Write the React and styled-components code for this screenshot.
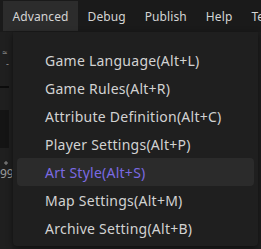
import React from "react";
import styled, { createGlobalStyle } from "styled-components";

const Global = createGlobalStyle`
  html, body { margin: 0; padding: 0; background: #1e1e1e; }
  body { font-family: "Noto Sans", "Open Sans", sans-serif; overflow: hidden; }
  #root { width: 261px; height: 249px; }
`;

const Screen = styled.div`
  position: relative;
  width: 261px;
  height: 249px;
  overflow: hidden;
  background: #1e1e1e;
`;

const MenuBar = styled.div`
  display: flex;
  align-items: center;
  height: 32px;
  padding-left: 3px;
  background: #1a1a1a;
  white-space: nowrap;
`;

const BarItem = styled.div`
  display: flex;
  align-items: center;
  height: 30px;
  padding: 0 9.5px;
  font-size: 12px;
  letter-spacing: 0.1px;
  color: #d4d4d4;
  background: ${(p) => (p.$active ? "#2c2c2c" : "transparent")};
`;

const Side = styled.div`
  width: 12px;
  height: 217px;
  display: flex;
  flex-direction: column;
  background: #1f1f1f;
  overflow: hidden;
`;

const Glyph = styled.div`
  height: ${(p) => p.$h}px;
  line-height: ${(p) => p.$h}px;
  padding-left: ${(p) => p.$pl || 0}px;
  font-size: ${(p) => p.$fs || 9}px;
  color: #9c9c9c;
  white-space: nowrap;
  overflow: hidden;
`;

const Rule = styled.div`
  width: 9px;
  height: 2px;
  background: #0c0c0c;
`;

const DarkBlock = styled.div`
  width: 9px;
  height: 38px;
  background: #141414;
`;

const Dropdown = styled.div`
  position: absolute;
  top: 32px;
  left: 13px;
  width: 245px;
  height: 214px;
  box-sizing: border-box;
  padding: 14px 4px 4px;
  background: #1f1f1f;
  border-radius: 0 0 4px 4px;
  box-shadow: 0 2px 6px rgba(0, 0, 0, 0.5);
  display: flex;
  flex-direction: column;
`;

const Item = styled.div`
  height: 28px;
  display: flex;
  align-items: center;
  padding-left: 28px;
  border-radius: 4px;
  font-size: 14px;
  letter-spacing: 0.25px;
  white-space: nowrap;
  color: ${(p) => (p.$active ? "#7b6ae2" : "#d2d2d2")};
  background: ${(p) => (p.$active ? "#2b2b2b" : "transparent")};
`;

const items = [
  "Game Language(Alt+L)",
  "Game Rules(Alt+R)",
  "Attribute Definition(Alt+C)",
  "Player Settings(Alt+P)",
  "Art Style(Alt+S)",
  "Map Settings(Alt+M)",
  "Archive Setting(Alt+B)",
];

export default function App() {
  return (
    <Screen>
      <Global />
      <MenuBar>
        <BarItem $active>Advanced</BarItem>
        <BarItem>Debug</BarItem>
        <BarItem>Publish</BarItem>
        <BarItem>Help</BarItem>
        <BarItem>Te</BarItem>
      </MenuBar>
      <Side>
        <Glyph $h={16} />
        <Glyph $h={10} $pl={2}>≈</Glyph>
        <Glyph $h={12} $pl={6}>-</Glyph>
        <Glyph $h={16} />
        <Rule />
        <Glyph $h={22} />
        <DarkBlock />
        <Glyph $h={12} />
        <svg width="12" height="6" viewBox="0 0 12 6">
          <path d="M6 1v4M4 3h4" stroke="#8a8a8a" strokeWidth="1" />
        </svg>
        <Glyph $h={16} $fs={12}>99</Glyph>
      </Side>
      <Dropdown>
        {items.map((t) => (
          <Item key={t} $active={t.startsWith("Art")}>
            {t}
          </Item>
        ))}
      </Dropdown>
    </Screen>
  );
}
